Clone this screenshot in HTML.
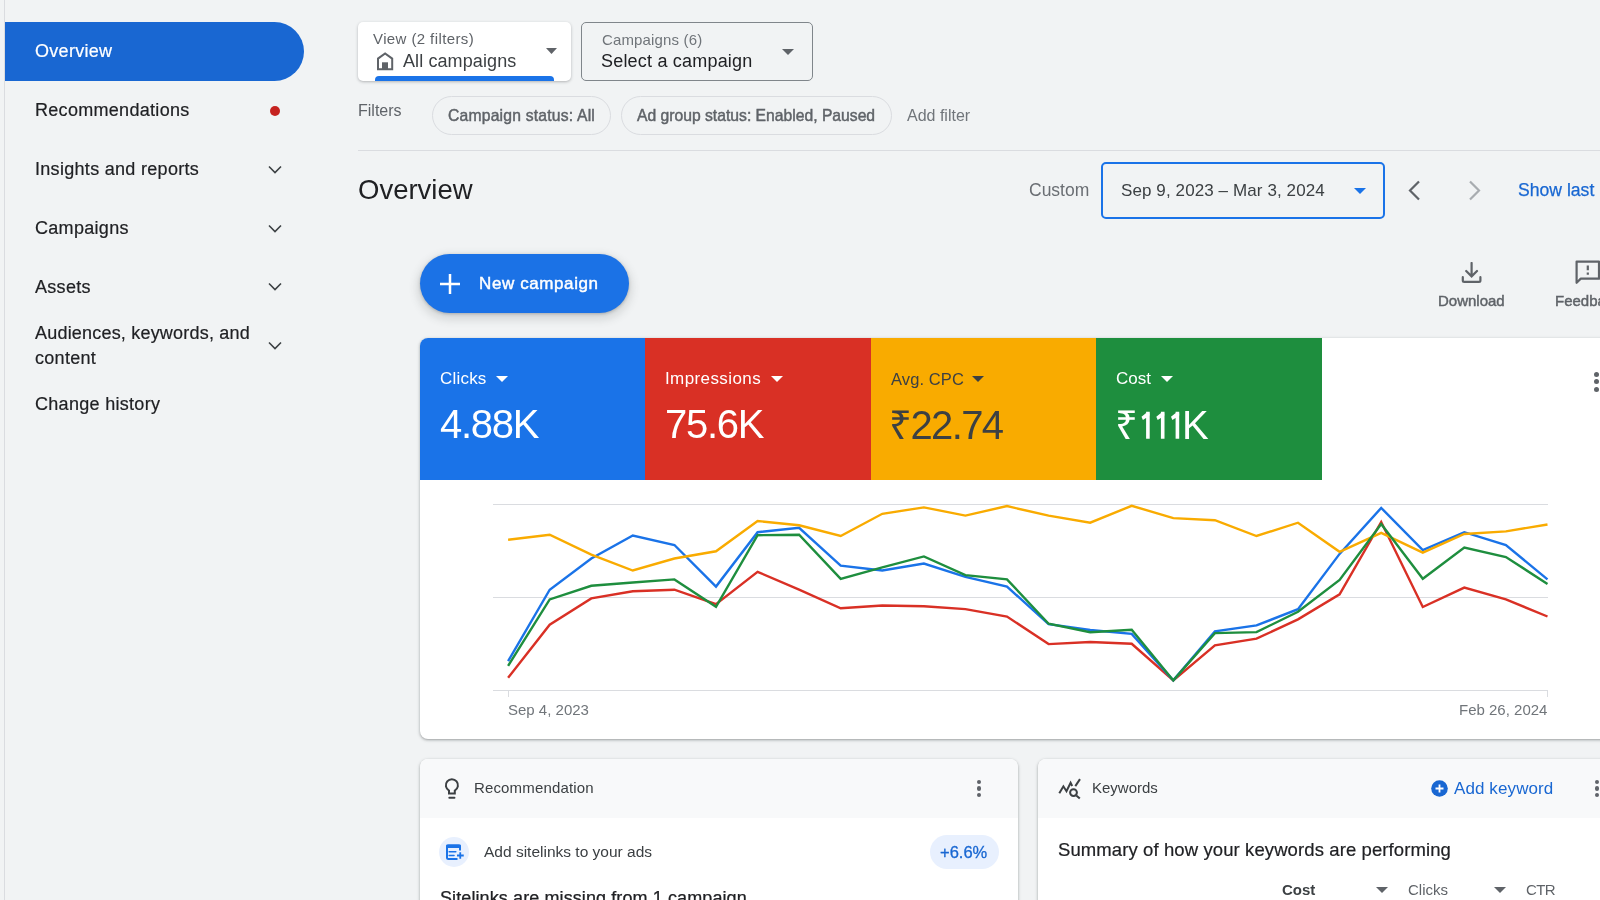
<!DOCTYPE html>
<html><head><meta charset="utf-8">
<style>
*{box-sizing:border-box;margin:0;padding:0}
html,body{width:1600px;height:900px;overflow:hidden;background:#f1f3f4;font-family:"Liberation Sans",sans-serif;color:#202124}
.t{will-change:transform}
.abs{position:absolute}
.t{position:absolute;white-space:nowrap;line-height:1}
#vline{position:absolute;left:4px;top:0;width:1px;height:900px;background:#dadce0}
.pill{position:absolute;left:5px;top:22px;width:299px;height:59px;background:#1967d2;border-radius:0 30px 30px 0}
.nav{font-size:18px;color:#202124;letter-spacing:0.3px;-webkit-text-stroke:0.2px currentColor}
.med{-webkit-text-stroke:0.45px currentColor}
.chev{position:absolute;width:14px;height:8px}
</style></head><body>
<div id="vline"></div>
<div class="pill"></div>
<div class="t nav" style="left:35px;top:42px;color:#fff">Overview</div>
<div class="t nav" style="left:35px;top:101px">Recommendations</div>
<div class="abs" style="left:269.5px;top:105.5px;width:10px;height:10px;border-radius:50%;background:#c5221f"></div>
<div class="t nav" style="left:35px;top:160px">Insights and reports</div>
<div class="t nav" style="left:35px;top:219px">Campaigns</div>
<div class="t nav" style="left:35px;top:278px">Assets</div>
<div class="t nav" style="left:35px;top:324px;letter-spacing:0.2px">Audiences, keywords, and</div>
<div class="t nav" style="left:35px;top:349px">content</div>
<div class="t nav" style="left:35px;top:395px">Change history</div>
<svg class="abs" style="left:268px;top:165px" width="14" height="9" viewBox="0 0 14 9"><path d="M1 1.5l6 6 6-6" fill="none" stroke="#3c4043" stroke-width="1.6"/></svg>
<svg class="abs" style="left:268px;top:224px" width="14" height="9" viewBox="0 0 14 9"><path d="M1 1.5l6 6 6-6" fill="none" stroke="#3c4043" stroke-width="1.6"/></svg>
<svg class="abs" style="left:268px;top:282px" width="14" height="9" viewBox="0 0 14 9"><path d="M1 1.5l6 6 6-6" fill="none" stroke="#3c4043" stroke-width="1.6"/></svg>
<svg class="abs" style="left:268px;top:341px" width="14" height="9" viewBox="0 0 14 9"><path d="M1 1.5l6 6 6-6" fill="none" stroke="#3c4043" stroke-width="1.6"/></svg>

<!-- View dropdown -->
<div class="abs" style="left:358px;top:22px;width:213px;height:59px;background:#fff;border-radius:5px;box-shadow:0 1px 3px rgba(60,64,67,.35);overflow:hidden">
  <div class="t" style="left:15px;top:9px;font-size:15px;color:#5f6368;letter-spacing:0.4px">View (2 filters)</div>
  <svg class="abs" style="left:18px;top:29px" width="20" height="21" viewBox="0 0 20 21"><path d="M2 18.3V7.6L9.1 2.4l7.1 5.2v10.7z" fill="none" stroke="#5f6368" stroke-width="2"/><rect x="6" y="11.3" width="6" height="7" fill="#5f6368"/></svg>
  <div class="t" style="left:45px;top:30px;font-size:18px;color:#3c4043;letter-spacing:0.1px">All campaigns</div>
  <svg class="abs" style="left:188px;top:26px" width="11" height="6" viewBox="0 0 11 6"><path d="M0 0h11L5.5 6z" fill="#5f6368"/></svg>
  <div class="abs" style="left:17px;top:54px;width:179px;height:8px;background:#1a73e8;border-radius:4px"></div>
</div>
<!-- Campaigns dropdown -->
<div class="abs" style="left:581px;top:22px;width:232px;height:59px;border:1px solid #80868b;border-radius:5px">
  <div class="t" style="left:19.5px;top:9px;font-size:15px;color:#70757a;letter-spacing:0.15px">Campaigns (6)</div>
  <div class="t" style="left:19px;top:29px;font-size:18px;color:#202124;letter-spacing:0.2px">Select a campaign</div>
  <svg class="abs" style="left:200px;top:26px" width="12" height="6" viewBox="0 0 12 6"><path d="M0 0h12L6 6z" fill="#5f6368"/></svg>
</div>

<!-- Filters row -->
<div class="t" style="left:358px;top:103px;font-size:16px;color:#5f6368">Filters</div>
<div class="abs" style="left:432px;top:96px;width:179px;height:39px;border:1px solid #dadce0;border-radius:20px"></div>
<div class="t med" style="left:448px;top:108px;font-size:15.7px;color:#5f6368;letter-spacing:0.2px">Campaign status: All</div>
<div class="abs" style="left:621px;top:96px;width:271px;height:39px;border:1px solid #dadce0;border-radius:20px"></div>
<div class="t med" style="left:637px;top:108px;font-size:15.7px;color:#5f6368">Ad group status: Enabled, Paused</div>
<div class="t" style="left:907px;top:108px;font-size:16px;color:#70757a">Add filter</div>
<div class="abs" style="left:358px;top:150px;width:1242px;height:1px;background:#dadce0"></div>

<!-- Overview title row -->
<div class="t" style="left:358px;top:176px;font-size:27.5px;color:#202124">Overview</div>
<div class="t" style="left:1029px;top:182px;font-size:17.5px;color:#6a6e73">Custom</div>
<div class="abs" style="left:1101px;top:162px;width:284px;height:57px;border:2px solid #1a73e8;border-radius:5px"></div>
<div class="t" style="left:1121px;top:181.5px;font-size:17px;color:#3c4043;letter-spacing:0.1px">Sep 9, 2023 – Mar 3, 2024</div>
<svg class="abs" style="left:1354px;top:188px" width="12" height="6" viewBox="0 0 12 6"><path d="M0 0h12L6 6z" fill="#1a73e8"/></svg>
<svg class="abs" style="left:1407px;top:180px" width="15" height="21" viewBox="0 0 15 21"><path d="M12 1.5l-9 9 9 9" fill="none" stroke="#5f6368" stroke-width="2.2"/></svg>
<svg class="abs" style="left:1467px;top:180px" width="15" height="21" viewBox="0 0 15 21"><path d="M3 1.5l9 9-9 9" fill="none" stroke="#a8acb0" stroke-width="2.2"/></svg>
<div class="t" style="left:1518px;top:182px;font-size:17.6px;color:#1967d2;-webkit-text-stroke:0.25px currentColor">Show last</div>

<!-- New campaign button -->
<div class="abs" style="left:420px;top:254px;width:209px;height:59px;background:#1b72e6;border-radius:30px;box-shadow:0 1px 3px rgba(60,64,67,.3),0 4px 8px 3px rgba(60,64,67,.15)"></div>
<svg class="abs" style="left:439.5px;top:273.8px" width="20" height="20" viewBox="0 0 20 20"><path d="M10 0v20M0 10h20" stroke="#fff" stroke-width="2.5"/></svg>
<div class="t med" style="left:479px;top:275px;font-size:17px;color:#fff;letter-spacing:0.6px">New campaign</div>

<!-- Download / Feedback -->
<svg class="abs" style="left:1460px;top:262px" width="23" height="22" viewBox="0 0 23 22"><path d="M11.6 1v13M6.2 9l5.4 5.4 5.4-5.4" fill="none" stroke="#5f6368" stroke-width="2.2" stroke-linecap="round"/><path d="M2.8 15.2v3.2a1.4 1.4 0 0 0 1.4 1.4h14.8a1.4 1.4 0 0 0 1.4-1.4v-3.2" fill="none" stroke="#5f6368" stroke-width="2.2" stroke-linecap="round"/></svg>
<div class="t med" style="left:1438px;top:293px;font-size:15px;color:#5f6368">Download</div>
<svg class="abs" style="left:1575px;top:260px" width="25" height="26" viewBox="0 0 25 26"><path d="M1.6 1.6h22.4v17H5.8l-4.2 4.2z" fill="none" stroke="#5f6368" stroke-width="2.2" stroke-linejoin="round"/><path d="M12.8 5.6v4.6M12.8 12.6v2.2" stroke="#5f6368" stroke-width="2.2"/></svg>
<div class="t med" style="left:1555px;top:293px;font-size:15px;color:#5f6368">Feedback</div>

<!-- Chart card -->
<div class="abs" style="left:420px;top:338px;width:1200px;height:401px;background:#fff;border-radius:8px;box-shadow:0 1px 2px rgba(60,64,67,.3),0 1px 3px 1px rgba(60,64,67,.15);overflow:hidden">
  <div class="abs" style="left:0;top:0;width:226px;height:142px;background:#1a73e8"></div>
  <div class="abs" style="left:225px;top:0;width:226px;height:142px;background:#d93025"></div>
  <div class="abs" style="left:451px;top:0;width:226px;height:142px;background:#f9ab00"></div>
  <div class="abs" style="left:676px;top:0;width:226px;height:142px;background:#1e8e3e"></div>
</div>
<div class="t" style="left:440px;top:370px;font-size:17px;color:#fff;letter-spacing:0.2px">Clicks</div>
<svg class="abs" style="left:496px;top:376px" width="12" height="6" viewBox="0 0 12 6"><path d="M0 0h12L6 6z" fill="#fff"/></svg>
<div class="t" style="left:440px;top:404px;font-size:40px;color:#fff;letter-spacing:-1.3px">4.88K</div>
<div class="t" style="left:665px;top:370px;font-size:17px;color:#fff;letter-spacing:0.4px">Impressions</div>
<svg class="abs" style="left:771px;top:376px" width="12" height="6" viewBox="0 0 12 6"><path d="M0 0h12L6 6z" fill="#fff"/></svg>
<div class="t" style="left:665px;top:404px;font-size:40px;color:#fff;letter-spacing:-1.3px">75.6K</div>
<div class="t" style="left:891px;top:370.5px;font-size:16.5px;color:#3c4043;letter-spacing:0.1px">Avg. CPC</div>
<svg class="abs" style="left:972px;top:376px" width="12" height="6" viewBox="0 0 12 6"><path d="M0 0h12L6 6z" fill="#3c4043"/></svg>
<div class="t" style="left:889px;top:405px;font-size:40px;color:#3c4043;letter-spacing:-1.6px">₹22.74</div>
<div class="t" style="left:1116px;top:370px;font-size:17px;color:#fff">Cost</div>
<svg class="abs" style="left:1161px;top:376px" width="12" height="6" viewBox="0 0 12 6"><path d="M0 0h12L6 6z" fill="#fff"/></svg>
<div class="t" style="left:1115px;top:405px;font-size:40px;color:#fff">₹</div><svg class="abs" style="left:0;top:0" width="1600" height="900"><path d="M1146.1 411.8h3.6v27h-3.6zM1149.7 411.8l0.2 3.6-7 4.6-1.4-3.2 6.2-5z" fill="#fff"/><path d="M1160.9 411.8h3.6v27h-3.6zM1164.5 411.8l0.2 3.6-7 4.6-1.4-3.2 6.2-5z" fill="#fff"/><path d="M1175.6 411.8h3.6v27h-3.6zM1179.2 411.8l0.2 3.6-7 4.6-1.4-3.2 6.2-5z" fill="#fff"/></svg><div class="t" style="left:1182px;top:405px;font-size:40px;color:#fff">K</div>
<div class="abs" style="left:1594px;top:372px;width:5px;height:5px;border-radius:50%;background:#5f6368"></div>
<div class="abs" style="left:1594px;top:379px;width:5px;height:5px;border-radius:50%;background:#5f6368"></div>
<div class="abs" style="left:1594px;top:386.5px;width:5px;height:5px;border-radius:50%;background:#5f6368"></div>

<!-- CHART SVG -->
<svg class="abs" style="left:0;top:0" width="1600" height="900" viewBox="0 0 1600 900" id="chart">
<path d="M493 504.5H1548M493 597.5H1548M493 690.5H1548" stroke="#dadce0" stroke-width="1"/>
<path d="M508.5 690v7M1547.5 690v7" stroke="#dadce0" stroke-width="1"/>
<polyline points="508.1,677.8 549.7,624.7 591.3,598.4 632.8,591.2 674.4,589.7 716.0,604.2 757.6,571.8 799.1,589.6 840.7,608.3 882.3,605.5 923.9,606.3 965.4,609.1 1007.0,616.6 1048.6,644.1 1090.2,642.0 1131.7,643.8 1173.3,680.4 1214.9,645.4 1256.5,638.7 1298.0,619.4 1339.6,594.3 1381.2,522.0 1422.8,607.0 1464.3,587.6 1505.9,599.4 1547.5,616.5" fill="none" stroke="#d93025" stroke-width="2.4" stroke-linejoin="miter"/>
<polyline points="508.1,661.2 549.7,589.7 591.3,558.5 632.8,535.5 674.4,545.0 716.0,586.6 757.6,532.2 799.1,527.8 840.7,565.6 882.3,570.5 923.9,563.6 965.4,576.9 1007.0,586.6 1048.6,624.2 1090.2,630.0 1131.7,633.9 1173.3,680.4 1214.9,631.3 1256.5,625.4 1298.0,609.2 1339.6,553.9 1381.2,507.9 1422.8,550.0 1464.3,532.2 1505.9,545.0 1547.5,579.4" fill="none" stroke="#1a73e8" stroke-width="2.4" stroke-linejoin="miter"/>
<polyline points="508.1,539.8 549.7,534.7 591.3,554.7 632.8,570.5 674.4,558.5 716.0,551.3 757.6,521.0 799.1,525.3 840.7,536.0 882.3,513.8 923.9,507.4 965.4,515.6 1007.0,506.1 1048.6,515.6 1090.2,522.7 1131.7,505.8 1173.3,518.1 1214.9,520.2 1256.5,536.0 1298.0,522.7 1339.6,551.8 1381.2,532.9 1422.8,552.6 1464.3,534.0 1505.9,531.4 1547.5,524.5" fill="none" stroke="#f9ab00" stroke-width="2.4" stroke-linejoin="miter"/>
<polyline points="508.1,665.8 549.7,599.4 591.3,585.8 632.8,582.5 674.4,579.4 716.0,606.8 757.6,535.2 799.1,534.7 840.7,578.9 882.3,567.4 923.9,556.4 965.4,575.1 1007.0,579.4 1048.6,623.7 1090.2,632.3 1131.7,629.8 1173.3,680.4 1214.9,633.1 1256.5,632.1 1298.0,611.8 1339.6,580.0 1381.2,524.0 1422.8,578.7 1464.3,547.5 1505.9,557.0 1547.5,584.0" fill="none" stroke="#1e8e3e" stroke-width="2.4" stroke-linejoin="miter"/>
</svg>
<div class="t" style="left:508px;top:702px;font-size:15px;color:#70757a">Sep 4, 2023</div>
<div class="t" style="left:1459px;top:702px;font-size:15px;color:#70757a">Feb 26, 2024</div>

<!-- Recommendation card -->
<div class="abs" style="left:420px;top:759px;width:598px;height:200px;background:#fff;border-radius:8px;box-shadow:0 1px 2px rgba(60,64,67,.3),0 1px 3px 1px rgba(60,64,67,.15);overflow:hidden">
  <div class="abs" style="left:0;top:0;width:598px;height:59px;background:#f8f9fa"></div>
</div>
<svg class="abs" style="left:443px;top:776px" width="18" height="24" viewBox="0 0 18 24"><path d="M6 17.5V14.56A6.05 6.05 0 1 1 11.8 14.56V17.5Z" fill="none" stroke="#3c4043" stroke-width="2"/><path d="M6.3 21.7h5.2" stroke="#3c4043" stroke-width="1.9" stroke-linecap="round"/></svg>
<div class="t" style="left:474px;top:780.3px;font-size:15px;color:#3c4043;letter-spacing:0.15px">Recommendation</div>
<div class="abs" style="left:976.5px;top:779.5px;width:4.5px;height:4.5px;border-radius:50%;background:#5f6368"></div>
<div class="abs" style="left:976.5px;top:786px;width:4.5px;height:4.5px;border-radius:50%;background:#5f6368"></div>
<div class="abs" style="left:976.5px;top:792.5px;width:4.5px;height:4.5px;border-radius:50%;background:#5f6368"></div>
<div class="abs" style="left:439px;top:837px;width:30px;height:30px;border-radius:50%;background:#e8f0fe"></div>
<svg class="abs" style="left:439px;top:836px" width="30" height="30" viewBox="0 0 30 30"><path d="M21 14.5V11a1.5 1.5 0 0 0-1.5-1.5h-10A1.5 1.5 0 0 0 8 11v10.5A1.5 1.5 0 0 0 9.5 23h9" fill="none" stroke="#1a73e8" stroke-width="2"/><rect x="7" y="8.5" width="15" height="3.5" rx="1.2" fill="#1a73e8"/><path d="M10.2 15.75h6.6M10.2 19.5h4.8" stroke="#1a73e8" stroke-width="1.6" stroke-linecap="round"/><path d="M21.25 16.25v6.5M18 19.5h6.75" stroke="#1a73e8" stroke-width="1.8"/></svg>
<div class="t" style="left:484px;top:844px;font-size:15.5px;color:#3c4043">Add sitelinks to your ads</div>
<div class="abs" style="left:929.5px;top:835px;width:69px;height:34px;border-radius:17px;background:#e8f0fe"></div>
<div class="t med" style="left:940px;top:844px;font-size:16.5px;color:#1967d2;-webkit-text-stroke:0.3px currentColor">+6.6%</div>
<div class="t" style="left:440px;top:889px;font-size:18px;color:#202124;letter-spacing:0.1px;-webkit-text-stroke:0.25px currentColor">Sitelinks are missing from 1 campaign</div>

<!-- Keywords card -->
<div class="abs" style="left:1038px;top:759px;width:600px;height:200px;background:#fff;border-radius:8px;box-shadow:0 1px 2px rgba(60,64,67,.3),0 1px 3px 1px rgba(60,64,67,.15);overflow:hidden">
  <div class="abs" style="left:0;top:0;width:600px;height:58.5px;background:#f8f9fa"></div>
</div>
<svg class="abs" style="left:1050px;top:770px" width="40" height="35" viewBox="0 0 40 35"><path d="M9.3 23.3L13.4 16.3L16.5 21.2L20.6 12.8L22.2 16" fill="none" stroke="#3c4043" stroke-width="2" stroke-linejoin="miter"/><path d="M25.3 16.1L30 9.1" stroke="#3c4043" stroke-width="2"/><circle cx="23.5" cy="22.6" r="3.4" fill="none" stroke="#3c4043" stroke-width="2"/><path d="M26.3 25.4L29.8 28.6" stroke="#3c4043" stroke-width="2"/></svg>
<div class="t" style="left:1092px;top:780.3px;font-size:15px;color:#3c4043">Keywords</div>
<svg class="abs" style="left:1430.5px;top:779.5px" width="17" height="17" viewBox="0 0 17 17"><circle cx="8.5" cy="8.5" r="8.3" fill="#1967d2"/><path d="M8.5 4.5v8M4.5 8.5h8" stroke="#fff" stroke-width="1.8"/></svg>
<div class="t" style="left:1454px;top:780px;font-size:17px;color:#1967d2;letter-spacing:0.1px">Add keyword</div>
<div class="abs" style="left:1594.5px;top:779.5px;width:4.5px;height:4.5px;border-radius:50%;background:#5f6368"></div>
<div class="abs" style="left:1594.5px;top:786px;width:4.5px;height:4.5px;border-radius:50%;background:#5f6368"></div>
<div class="abs" style="left:1594.5px;top:792.5px;width:4.5px;height:4.5px;border-radius:50%;background:#5f6368"></div>
<div class="t" style="left:1058px;top:841px;font-size:18.5px;color:#202124;letter-spacing:0.1px;-webkit-text-stroke:0.2px currentColor">Summary of how your keywords are performing</div>
<div class="t" style="left:1282px;top:882px;font-size:15px;font-weight:700;color:#3c4043">Cost</div>
<svg class="abs" style="left:1376px;top:887.3px" width="12" height="6" viewBox="0 0 12 6"><path d="M0 0h12L6 6z" fill="#5f6368"/></svg>
<div class="t" style="left:1408px;top:882px;font-size:15px;color:#5f6368">Clicks</div>
<svg class="abs" style="left:1494px;top:887.3px" width="12" height="6" viewBox="0 0 12 6"><path d="M0 0h12L6 6z" fill="#5f6368"/></svg>
<div class="t" style="left:1526px;top:882px;font-size:15px;color:#5f6368;letter-spacing:-0.6px">CTR</div>
</body></html>
